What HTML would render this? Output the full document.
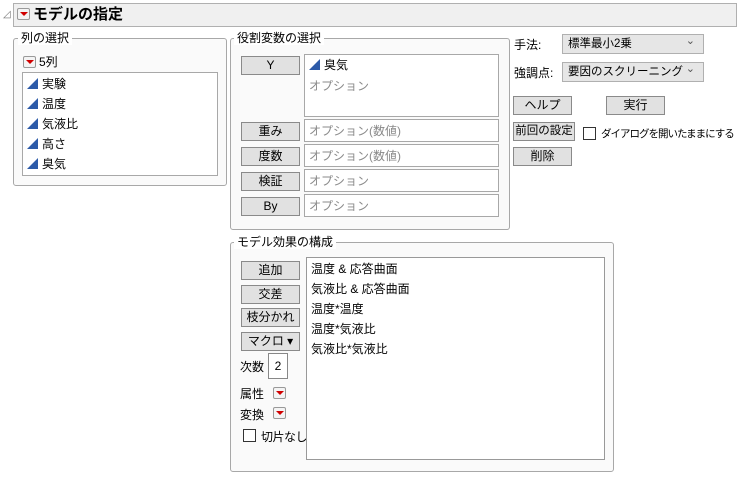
<!DOCTYPE html>
<html><head><meta charset="utf-8"><style>
*{box-sizing:border-box;margin:0;padding:0}
body{width:737px;height:477px;background:#fff;font-family:"Liberation Sans","Noto Sans CJK JP",sans-serif;font-size:12px;color:#000;position:relative;overflow:hidden}
.a{position:absolute;white-space:nowrap}
.grp{position:absolute;border:1px solid #a8a8a8;border-radius:3px;background:#fafafa}
.gl{position:absolute;background:#fff;padding:0 3px;font-size:12px;line-height:14px}
.btn{position:absolute;width:59px;height:19px;background:#e1e1e1;border:1px solid #8a8a8a;text-align:center;font-size:12px;line-height:17px;white-space:nowrap}
.box{position:absolute;background:#fff;border:1px solid #a8a8a8}
.ph{color:#8a8a8a;font-size:12px;line-height:16px;padding-left:4px}
.tri{display:inline-block;width:0;height:0;border-left:11px solid transparent;border-bottom:11px solid #2c5aa8;vertical-align:-1px;margin-right:4px}
.rd{position:absolute;width:13px;height:12px;border:1px solid #9a9a9a;border-radius:2px;background:#f4f4f4}
.rd:after{content:"";position:absolute;left:2px;top:3px;border-left:4px solid transparent;border-right:4px solid transparent;border-top:4px solid #d00000}
.cb{position:absolute;width:13px;height:13px;border:1px solid #333;background:#fff}
.dd{position:absolute;width:142px;height:20px;background:#e6e6e6;border:1px solid #b0b0b0;font-size:11.5px;line-height:18px;padding-left:5px;white-space:nowrap}
.dd:after{content:"⌄";position:absolute;right:8px;top:-3px;font-size:11px;color:#555}
.it{position:absolute;left:4px;font-size:12px;line-height:14px;white-space:nowrap}
</style></head><body>
<div class="a" style="left:3px;top:9px;font-size:10px;color:#777">◿</div>
<div class="a" style="left:13px;top:3px;width:724px;height:24px;background:#f0f0f0;border:1px solid #b0b0b0"></div>
<div class="rd" style="left:17px;top:8px"></div>
<div class="a" style="left:33px;top:5px;font-size:15px;font-weight:bold;line-height:20px">モデルの指定</div>

<div class="grp" style="left:13px;top:38px;width:214px;height:148px"></div>
<div class="gl" style="left:18px;top:31px">列の選択</div>
<div class="rd" style="left:23px;top:56px"></div>
<div class="a" style="left:39px;top:55px;line-height:14px">5列</div>
<div class="box" style="left:22px;top:72px;width:196px;height:104px">
<div class="it" style="top:4px"><span class="tri"></span>実験</div>
<div class="it" style="top:24px"><span class="tri"></span>温度</div>
<div class="it" style="top:44px"><span class="tri"></span>気液比</div>
<div class="it" style="top:64px"><span class="tri"></span>高さ</div>
<div class="it" style="top:84px"><span class="tri"></span>臭気</div>
</div>

<div class="grp" style="left:230px;top:38px;width:280px;height:192px"></div>
<div class="gl" style="left:234px;top:31px">役割変数の選択</div>
<div class="btn" style="left:241px;top:56px">Y</div>
<div class="box" style="left:304px;top:54px;width:195px;height:63px">
<div style="padding:3px 4px;line-height:15px"><span class="tri"></span>臭気</div>
<div class="ph" style="padding-top:2px">オプション</div></div>
<div class="btn" style="left:241px;top:122px">重み</div>
<div class="box" style="left:304px;top:119px;width:195px;height:23px"><div class="ph" style="padding-top:3px">オプション(数値)</div></div>
<div class="btn" style="left:241px;top:147px">度数</div>
<div class="box" style="left:304px;top:144px;width:195px;height:23px"><div class="ph" style="padding-top:3px">オプション(数値)</div></div>
<div class="btn" style="left:241px;top:172px">検証</div>
<div class="box" style="left:304px;top:169px;width:195px;height:23px"><div class="ph" style="padding-top:3px">オプション</div></div>
<div class="btn" style="left:241px;top:197px">By</div>
<div class="box" style="left:304px;top:194px;width:195px;height:23px"><div class="ph" style="padding-top:3px">オプション</div></div>

<div class="a" style="left:514px;top:36px">手法:</div>
<div class="dd" style="left:562px;top:34px">標準最小2乗</div>
<div class="a" style="left:514px;top:64px">強調点:</div>
<div class="dd" style="left:562px;top:62px">要因のスクリーニング</div>
<div class="btn" style="left:513px;top:96px">ヘルプ</div>
<div class="btn" style="left:606px;top:96px">実行</div>
<div class="btn" style="left:513px;top:122px;width:62px;font-size:11.5px">前回の設定</div>
<div class="cb" style="left:583px;top:127px"></div>
<div class="a" style="left:601px;top:126px;font-size:10.5px;letter-spacing:-1px">ダイアログを開いたままにする</div>
<div class="btn" style="left:513px;top:147px">削除</div>

<div class="grp" style="left:230px;top:242px;width:384px;height:230px"></div>
<div class="gl" style="left:234px;top:235px">モデル効果の構成</div>
<div class="btn" style="left:241px;top:261px">追加</div>
<div class="btn" style="left:241px;top:285px">交差</div>
<div class="btn" style="left:241px;top:308px">枝分かれ</div>
<div class="btn" style="left:241px;top:332px">マクロ ▾</div>
<div class="a" style="left:240px;top:358px">次数</div>
<div class="box" style="left:268px;top:353px;width:20px;height:26px;border-color:#888;text-align:center;line-height:24px">2</div>
<div class="a" style="left:240px;top:385px">属性</div>
<div class="rd" style="left:273px;top:387px"></div>
<div class="a" style="left:240px;top:406px">変換</div>
<div class="rd" style="left:273px;top:407px"></div>
<div class="cb" style="left:243px;top:429px"></div>
<div class="a" style="left:261px;top:428px;letter-spacing:-0.5px">切片なし</div>
<div class="box" style="left:306px;top:257px;width:299px;height:203px;border-color:#999">
<div class="it" style="top:4px">温度 &amp; 応答曲面</div>
<div class="it" style="top:24px">気液比 &amp; 応答曲面</div>
<div class="it" style="top:44px">温度*温度</div>
<div class="it" style="top:64px">温度*気液比</div>
<div class="it" style="top:84px">気液比*気液比</div>
</div>
</body></html>
